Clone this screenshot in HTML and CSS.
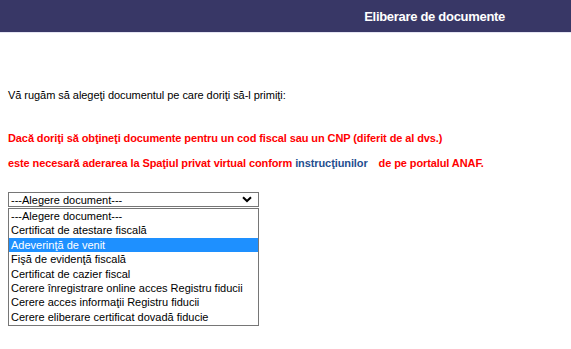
FILE: index.html
```html
<!DOCTYPE html>
<html lang="ro">
<head>
<meta charset="utf-8">
<link rel="stylesheet" href="styles.css">
</head>
<body>
<div class="header"><div class="title">Eliberare de documente</div></div>
<div class="content">
  <p class="intro">Vă rugăm să alegeţi documentul pe care doriţi să-l primiţi:</p>
  <p class="warn">Dacă doriţi să obţineţi documente pentru un cod fiscal sau un CNP (diferit de al dvs.)</p>
  <p class="warn warn2">este necesară aderarea la Spaţiul privat virtual conform <span class="link">instrucţiunilor</span> <span class="gap"></span>de pe portalul ANAF.</p>
  <div class="select">
    <span>---Alegere document---</span>
    <svg class="chev" width="10" height="7" viewBox="0 0 10 7"><path d="M1 1.2 L5 5 L9 1.2" fill="none" stroke="#000" stroke-width="2"/></svg>
  </div>
  <ul class="list">
    <li>---Alegere document---</li>
    <li>Certificat de atestare fiscală</li>
    <li class="sel">Adeverinţă de venit</li>
    <li>Fişă de evidenţă fiscală</li>
    <li>Certificat de cazier fiscal</li>
    <li>Cerere înregistrare online acces Registru fiducii</li>
    <li>Cerere acces informaţii Registru fiducii</li>
    <li>Cerere eliberare certificat dovadă fiducie</li>
  </ul>
</div>
</body>
</html>
```
FILE: styles.css
```css
html, body { margin: 0; padding: 0; background: #fff; }
body { font-family: "Liberation Sans", Arial, sans-serif; font-size: 11px; color: #000; }
.header {
  height: 32px;
  background: #383766;
  border-bottom: 1px solid #e4e4f2;
  display: flex;
  align-items: center;
  justify-content: flex-end;
  padding-right: 66px;
}
.title { color: #fff; font-weight: bold; font-size: 13px; font-family: "Liberation Sans", Arial, sans-serif; letter-spacing: -0.3px; }
.content { padding: 0 8px; }
.intro { margin: 56px 0 0; line-height: 13px; letter-spacing: -0.05px; }
.warn { margin: 30px 0 0; color: #f00; font-weight: bold; line-height: 13px; letter-spacing: -0.1px; }
.warn2 { margin-top: 12px; }
.link { color: #1f4f8f; }
.gap { display: inline-block; width: 8px; }
.select {
  margin-top: 22px;
  height: 13px;
  border: 1px solid #767676;
  display: flex;
  align-items: center;
  justify-content: space-between;
  padding: 0 0 0 2px;
  box-sizing: content-box;
  width: 247px;
}
.chev { margin-right: 6px; }
.list {
  list-style: none;
  margin: 1px 0 0;
  padding: 0 0 1px;
  width: 249px;
  border: 1px solid #767676;
}
.list li { height: 14.4px; line-height: 14px; padding-left: 2px; white-space: nowrap; }
.list li.sel { background: #1e90ff; color: #fff; }
```
